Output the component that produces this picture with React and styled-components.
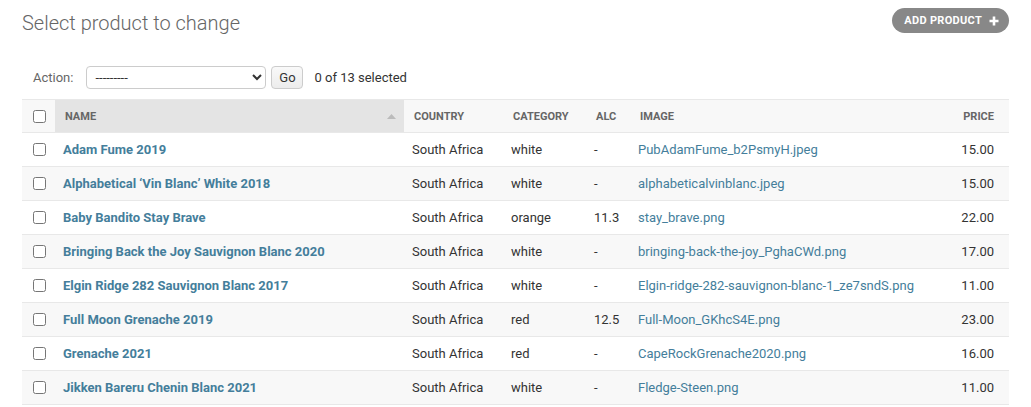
import React from "react";
import styled, { createGlobalStyle } from "styled-components";

const Global = createGlobalStyle`
  html, body { margin: 0; padding: 0; background: #fff; }
  body { font-family: Roboto, "Liberation Sans", Arial, sans-serif; color: #333; font-size: 13px; }
  * { box-sizing: border-box; }
`;

const Page = styled.div`
  padding: 0 22px;
`;

const Header = styled.div`
  display: flex;
  justify-content: space-between;
  align-items: flex-start;
  padding-top: 8px;
`;

const Title = styled.h1`
  margin: 2px 0 0;
  font-size: 20px;
  line-height: 26px;
  font-weight: 300;
  color: #666;
`;

const AddButton = styled.a`
  display: flex;
  align-items: center;
  gap: 7px;
  height: 25px;
  padding: 0 10px 0 12px;
  border-radius: 13px;
  background: #888;
  color: #fff;
  font-size: 11px;
  font-weight: 700;
  letter-spacing: 0.3px;
  text-transform: uppercase;
  text-decoration: none;
`;

const Actions = styled.div`
  display: flex;
  align-items: center;
  margin-top: 25px;
  padding: 5px 10px 5px 11px;
  height: 33px;
  color: #666;
  font-size: 13px;
`;

const Label = styled.label`
  margin-right: 13px;
`;

const Select = styled.select`
  width: 180px;
  height: 23px;
  font-family: Roboto, "Liberation Sans", Arial, sans-serif;
  font-size: 13px;
  color: #333;
  border: 1px solid #ccc;
  border-radius: 4px;
  background: #fff;
  padding: 0 4px;
`;

const GoButton = styled.button`
  margin-left: 5px;
  width: 32px;
  height: 23px;
  font-family: Roboto, "Liberation Sans", Arial, sans-serif;
  font-size: 13px;
  color: #333;
  border: 1px solid #ccc;
  border-radius: 4px;
  background: linear-gradient(#f9f9f9, #ececec);
  padding: 0;
`;

const Counter = styled.span`
  margin-left: 11px;
  color: #333;
`;

const Table = styled.table`
  margin-top: 5px;
  width: 987px;
  border-collapse: collapse;
  table-layout: fixed;
`;

const Th = styled.th`
  height: 33px;
  padding: 0 ${(p) => (p.$right ? "15px" : p.$sorted ? "8px" : "10px")} 0
    ${(p) => (p.$check ? "11px" : "10px")};
  text-align: ${(p) => (p.$right ? "right" : "left")};
  font-size: 11px;
  font-weight: 700;
  text-transform: uppercase;
  color: #666;
  background: ${(p) => (p.$sorted ? "#e4e4e4" : "#f8f8f8")};
  border-top: 1px solid #e8e8e8;
  border-bottom: 1px solid #e8e8e8;
  vertical-align: middle;
  white-space: nowrap;
`;

const SortBox = styled.div`
  display: flex;
  align-items: center;
  justify-content: space-between;
`;

const Row = styled.tr`
  background: ${(p) => (p.$alt ? "#f8f8f8" : "#fff")};
`;

const Td = styled.td`
  height: 34px;
  padding: 0 ${(p) => (p.$right ? "15px" : "8px")} 0 ${(p) => (p.$check ? "11px" : "8px")};
  text-align: ${(p) => (p.$right ? "right" : "left")};
  font-size: 13px;
  line-height: 17px;
  color: #333;
  border-bottom: 1px solid #e8e8e8;
  vertical-align: middle;
  white-space: nowrap;
  overflow: hidden;
`;

const NameLink = styled.a`
  color: #447e9b;
  font-weight: 700;
  text-decoration: none;
`;

const FileLink = styled.a`
  color: #447e9b;
  text-decoration: none;
`;

const Check = styled.input.attrs({ type: "checkbox" })`
  display: block;
  margin: 0;
  width: 13px;
  height: 13px;
`;

const PlusIcon = () => (
  <svg width="10" height="10" viewBox="0 0 10 10">
    <path d="M5 0.5v9M0.5 5h9" stroke="#fff" strokeWidth="2.6" />
  </svg>
);

const SortArrow = () => (
  <svg width="9" height="5" viewBox="0 0 9 5">
    <path d="M4.5 0L9 5H0z" fill="#bbb" />
  </svg>
);

const rows = [
  ["Adam Fume 2019", "white", "-", "PubAdamFume_b2PsmyH.jpeg", "15.00"],
  ["Alphabetical \u2018Vin Blanc\u2019 White 2018", "white", "-", "alphabeticalvinblanc.jpeg", "15.00"],
  ["Baby Bandito Stay Brave", "orange", "11.3", "stay_brave.png", "22.00"],
  ["Bringing Back the Joy Sauvignon Blanc 2020", "white", "-", "bringing-back-the-joy_PghaCWd.png", "17.00"],
  ["Elgin Ridge 282 Sauvignon Blanc 2017", "white", "-", "Elgin-ridge-282-sauvignon-blanc-1_ze7sndS.png", "11.00"],
  ["Full Moon Grenache 2019", "red", "12.5", "Full-Moon_GKhcS4E.png", "23.00"],
  ["Grenache 2021", "red", "-", "CapeRockGrenache2020.png", "16.00"],
  ["Jikken Bareru Chenin Blanc 2021", "white", "-", "Fledge-Steen.png", "11.00"],
];

export default function App() {
  return (
    <Page>
      <Global />
      <Header>
        <Title>Select product to change</Title>
        <AddButton href="#">
          Add product <PlusIcon />
        </AddButton>
      </Header>
      <Actions>
        <Label>Action:</Label>
        <Select defaultValue="">
          <option value="">---------</option>
          <option value="delete">Delete selected products</option>
        </Select>
        <GoButton type="button">Go</GoButton>
        <Counter>0 of 13 selected</Counter>
      </Actions>
      <Table>
        <colgroup>
          <col style={{ width: 33 }} />
          <col style={{ width: 349 }} />
          <col style={{ width: 99 }} />
          <col style={{ width: 83 }} />
          <col style={{ width: 44 }} />
          <col style={{ width: 310 }} />
          <col style={{ width: 69 }} />
        </colgroup>
        <thead>
          <tr>
            <Th $check>
              <Check />
            </Th>
            <Th $sorted>
              <SortBox>
                <span>Name</span>
                <SortArrow />
              </SortBox>
            </Th>
            <Th>Country</Th>
            <Th>Category</Th>
            <Th>Alc</Th>
            <Th>Image</Th>
            <Th $right>Price</Th>
          </tr>
        </thead>
        <tbody>
          {rows.map((r, i) => (
            <Row key={r[0]} $alt={i % 2 === 1}>
              <Td $check>
                <Check />
              </Td>
              <Td>
                <NameLink href="#">{r[0]}</NameLink>
              </Td>
              <Td>South Africa</Td>
              <Td>{r[1]}</Td>
              <Td>{r[2]}</Td>
              <Td>
                <FileLink href="#">{r[3]}</FileLink>
              </Td>
              <Td $right>{r[4]}</Td>
            </Row>
          ))}
        </tbody>
      </Table>
    </Page>
  );
}
